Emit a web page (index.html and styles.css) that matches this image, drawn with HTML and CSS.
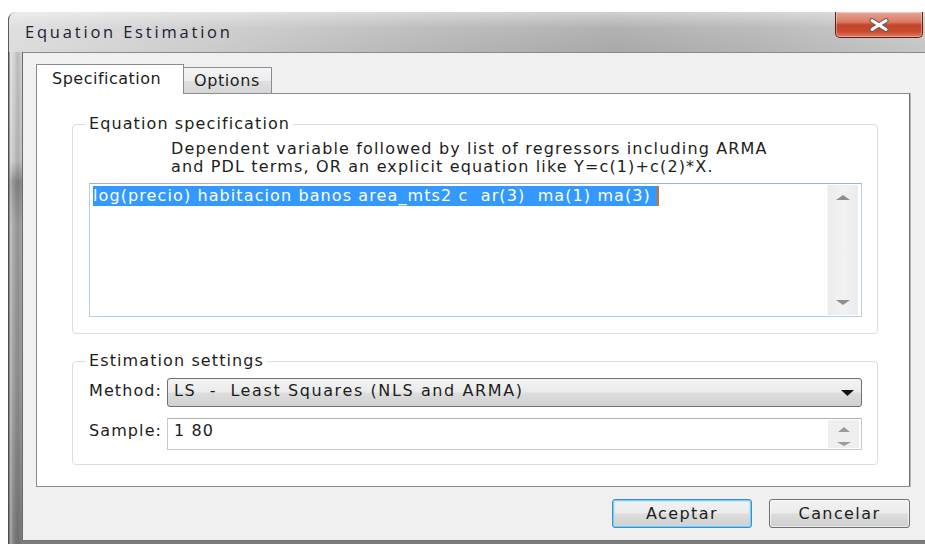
FILE: index.html
```html
<!DOCTYPE html>
<html lang="en">
<head>
<meta charset="utf-8">
<title>Equation Estimation</title>
<link rel="stylesheet" href="styles.css">
</head>
<body>
<div class="window">
  <div class="titlebar">
    <span class="title">Equation Estimation</span>
    <button class="close" aria-label="Close">
      <svg width="24" height="14" viewBox="0 0 24 14" aria-hidden="true">
        <path d="M5 2.5 L19 11.5 M19 2.5 L5 11.5" stroke="#6b5a58" stroke-width="5" stroke-linecap="round"/>
        <path d="M5 2.5 L19 11.5 M19 2.5 L5 11.5" stroke="#ffffff" stroke-width="3" stroke-linecap="round"/>
      </svg>
    </button>
  </div>
  <div class="frame-body">
    <div class="client">
      <div class="tabs">
        <div class="tab active">Specification</div>
        <div class="tab">Options</div>
      </div>
      <div class="panel">
        <fieldset class="group spec">
          <legend>Equation specification</legend>
          <p class="hint">Dependent variable followed by list of regressors including ARMA<br>and PDL terms, OR an explicit equation like Y=c(1)+c(2)*X.</p>
          <div class="memo">
            <div class="memo-text"><span class="sel">log(precio) habitacion banos area_mts2 c  ar(3)  ma(1) ma(3) </span><span class="caret"></span></div>
            <div class="vscroll">
              <span class="arrow up"></span>
              <span class="arrow down"></span>
            </div>
          </div>
        </fieldset>
        <fieldset class="group settings">
          <legend>Estimation settings</legend>
          <div class="form">
            <label class="lbl">Method:</label>
            <div class="combo">
              <span class="combo-text">LS  -  Least Squares (NLS and ARMA)</span>
              <svg class="drop" width="13" height="6" viewBox="0 0 13 6" aria-hidden="true"><path d="M0 0 H13 L6.5 6 Z" fill="#111"/></svg>
            </div>
            <label class="lbl">Sample:</label>
            <div class="field">
              <span class="field-text">1 80</span>
              <div class="spin">
                <span class="arrow sup"></span>
                <span class="arrow sdown"></span>
              </div>
            </div>
          </div>
        </fieldset>
      </div>
      <div class="buttons">
        <button class="btn default">Aceptar</button>
        <button class="btn">Cancelar</button>
      </div>
    </div>
  </div>
</div>
</body>
</html>
```

FILE: styles.css
```css
* { box-sizing: border-box; }

html, body {
  margin: 0;
  padding: 0;
  background: #ffffff;
}

body {
  width: 925px;
  height: 544px;
  overflow: hidden;
  font-family: "DejaVu Sans", Verdana, sans-serif;
  font-size: 16px;
  letter-spacing: 1.1px;
  color: #1d1d22;
}

/* window frame */
.window {
  margin: 12px 0 0 8px;
  width: 917px;
  height: 532px;
  display: flex;
  flex-direction: column;
  border-top-left-radius: 8px;
  overflow: hidden;
  background:
    linear-gradient(to right, #4e4e4e 0, #4e4e4e 1px, rgba(255,255,255,0.35) 2px, rgba(255,255,255,0) 6px, rgba(0,0,0,0.12) 10px, rgba(0,0,0,0) 14px),
    linear-gradient(to bottom, #d9d9d9 0%, #c4c4c4 28%, #8c8c8c 32%, #a6a6a6 40%, #9a9a9a 70%, #7c7c7c 100%);
}

.titlebar {
  height: 40px;
  flex: none;
  display: flex;
  justify-content: space-between;
  align-items: flex-start;
  background:
    linear-gradient(to bottom, rgba(255,255,255,0.45) 0, rgba(255,255,255,0.1) 40%, rgba(255,255,255,0) 100%),
    linear-gradient(to right, #dcdcdc 0%, #cbcbcb 22%, #b7b7b7 45%, #a9a9a9 66%, #b4b4b4 82%, #c6c6c6 100%);
  border-left: 1px solid #5a5a5a;
  border-top-left-radius: 8px;
}

.title {
  font-family: "Open Sans", "DejaVu Sans", sans-serif;
  font-size: 16.5px;
  letter-spacing: 2.8px;
  line-height: 40px;
  padding-left: 16px;
  color: #1b2233;
}

.close {
  width: 88px;
  height: 26px;
  margin-right: 2px;
  padding: 0;
  border: 1px solid #5c2219;
  border-top: none;
  border-radius: 0 0 5px 5px;
  display: flex;
  align-items: center;
  justify-content: center;
  background: linear-gradient(to bottom, #e7a797 0%, #d97a64 40%, #c5432a 52%, #c84a2f 78%, #e07a5e 100%);
  box-shadow: inset 0 0 0 1px rgba(255,255,255,0.35);
}

.frame-body {
  flex: 1;
  display: flex;
  padding: 0 0 3px 14px;
}

/* dialog client area */
.client {
  flex: 1;
  background: #f0f0f0;
  border-left: 1px solid #6a6a6a;
  border-top: 1px solid #8a8a8a;
  border-bottom: 1px solid #727272;
  padding: 11px 0 0 13px;
  display: flex;
  flex-direction: column;
}

.tabs {
  display: flex;
  align-items: flex-end;
  height: 29px;
}

.tab {
  height: 26px;
  width: 88px;
  padding: 1px 0 0 10px;
  line-height: 24px;
  letter-spacing: 0.6px;
  border: 1px solid #898c95;
  border-bottom: none;
  border-left: none;
  background: linear-gradient(to bottom, #f4f4f4 0%, #ececec 50%, #e0e0e0 52%, #d6d6d6 100%);
}

.tab.active {
  position: relative;
  z-index: 1;
  height: 30px;
  width: 148px;
  margin-bottom: -1px;
  padding: 0 0 0 15px;
  line-height: 27px;
  letter-spacing: 0.5px;
  border-left: 1px solid #898c95;
  background: #ffffff;
}

.panel {
  width: 874px;
  height: 394px;
  background: #ffffff;
  border: 1px solid #898c95;
  border-right-color: #6f7077;
  box-shadow: 1px 0 0 #b9b9b9;
  padding: 21px 31px 0 35px;
}

/* group boxes */
.group {
  margin: 0;
  min-width: 0;
  border: 1px solid #d5dfe5;
  border-radius: 4px;
  padding: 0 15px 16px 16px;
}

.group legend {
  padding: 0 3px;
  margin-left: -3px;
  line-height: 18px;
}

.settings {
  margin-top: 18px;
  padding-bottom: 14px;
}

.hint {
  margin: 7px 0 0 82px;
  line-height: 18px;
  letter-spacing: 1.15px;
}

.memo {
  margin-top: 7px;
  height: 134px;
  display: flex;
  background: #ffffff;
  border: 1px solid #b7d0e8;
  border-top-color: #98b4d0;
}

.memo-text {
  flex: 1;
  padding: 2px 3px;
}

.sel {
  display: inline-block;
  white-space: pre;
  line-height: 20px;
  letter-spacing: 1.1px;
  background: #3399ff;
  color: #ffffff;
}

.caret {
  display: inline-block;
  width: 2px;
  height: 20px;
  vertical-align: top;
  background: #c9741f;
}

.vscroll {
  width: 31px;
  margin: 1px 3px 1px 0;
  padding: 10px 0 10px;
  display: flex;
  flex-direction: column;
  justify-content: space-between;
  align-items: center;
  background: linear-gradient(to right, #ebebeb, #f2f2f2 50%, #ebebeb);
  border-left: 1px solid #f6f6f6;
}

.arrow {
  display: block;
  width: 0;
  height: 0;
  border-left: 7px solid transparent;
  border-right: 7px solid transparent;
}

.arrow.up { border-bottom: 5px solid #8f8f8f; }
.arrow.down { border-top: 5px solid #8f8f8f; }

/* estimation settings form */
.form {
  margin-top: 8px;
  display: grid;
  grid-template-columns: 78px 1fr;
  row-gap: 11px;
}

.lbl {
  line-height: 24px;
  padding-top: 1px;
}

.combo {
  height: 29px;
  border: 1px solid #707070;
  border-radius: 3px;
  padding: 0 7px 0 6px;
  display: flex;
  justify-content: space-between;
  align-items: flex-start;
  background: linear-gradient(to bottom, #f3f3f3 0%, #ebebeb 48%, #dddddd 52%, #d0d0d0 100%);
}

.combo-text {
  white-space: pre;
  line-height: 24px;
  letter-spacing: 1.6px;
}

.drop {
  margin-top: 11px;
}

.field {
  height: 32px;
  border: 1px solid #c6c9cf;
  border-top-color: #aeb1b7;
  background: #ffffff;
  padding-left: 6px;
  display: flex;
  justify-content: space-between;
  align-items: flex-start;
}

.field-text {
  line-height: 24px;
}

.spin {
  width: 31px;
  height: 28px;
  margin: 1px 2px 0 0;
  padding-top: 7px;
  display: flex;
  flex-direction: column;
  align-items: center;
  gap: 10px;
  background: #efefef;
}

.arrow.sup {
  border-left-width: 6px;
  border-right-width: 6px;
  border-bottom: 5px solid #9a9a9a;
}

.arrow.sdown {
  border-top: 4px solid #9a9a9a;
}

/* dialog buttons */
.buttons {
  margin-top: 12px;
  padding-right: 15px;
  display: flex;
  justify-content: flex-end;
  gap: 17px;
}

.btn {
  width: 141px;
  height: 29px;
  padding: 0;
  font: inherit;
  letter-spacing: 1.4px;
  line-height: 27px;
  color: #1d1d22;
  border: 1px solid #707070;
  border-radius: 3px;
  background: linear-gradient(to bottom, #f2f2f2 0%, #ebebeb 48%, #dddddd 52%, #cfcfcf 100%);
  box-shadow: inset 0 0 0 1px rgba(255,255,255,0.6);
}

.btn.default {
  width: 140px;
  border-color: #3c8cc8;
  box-shadow: inset 0 0 0 1px #7fcdf3, inset 0 0 0 2px rgba(170,225,250,0.6);
}
```
